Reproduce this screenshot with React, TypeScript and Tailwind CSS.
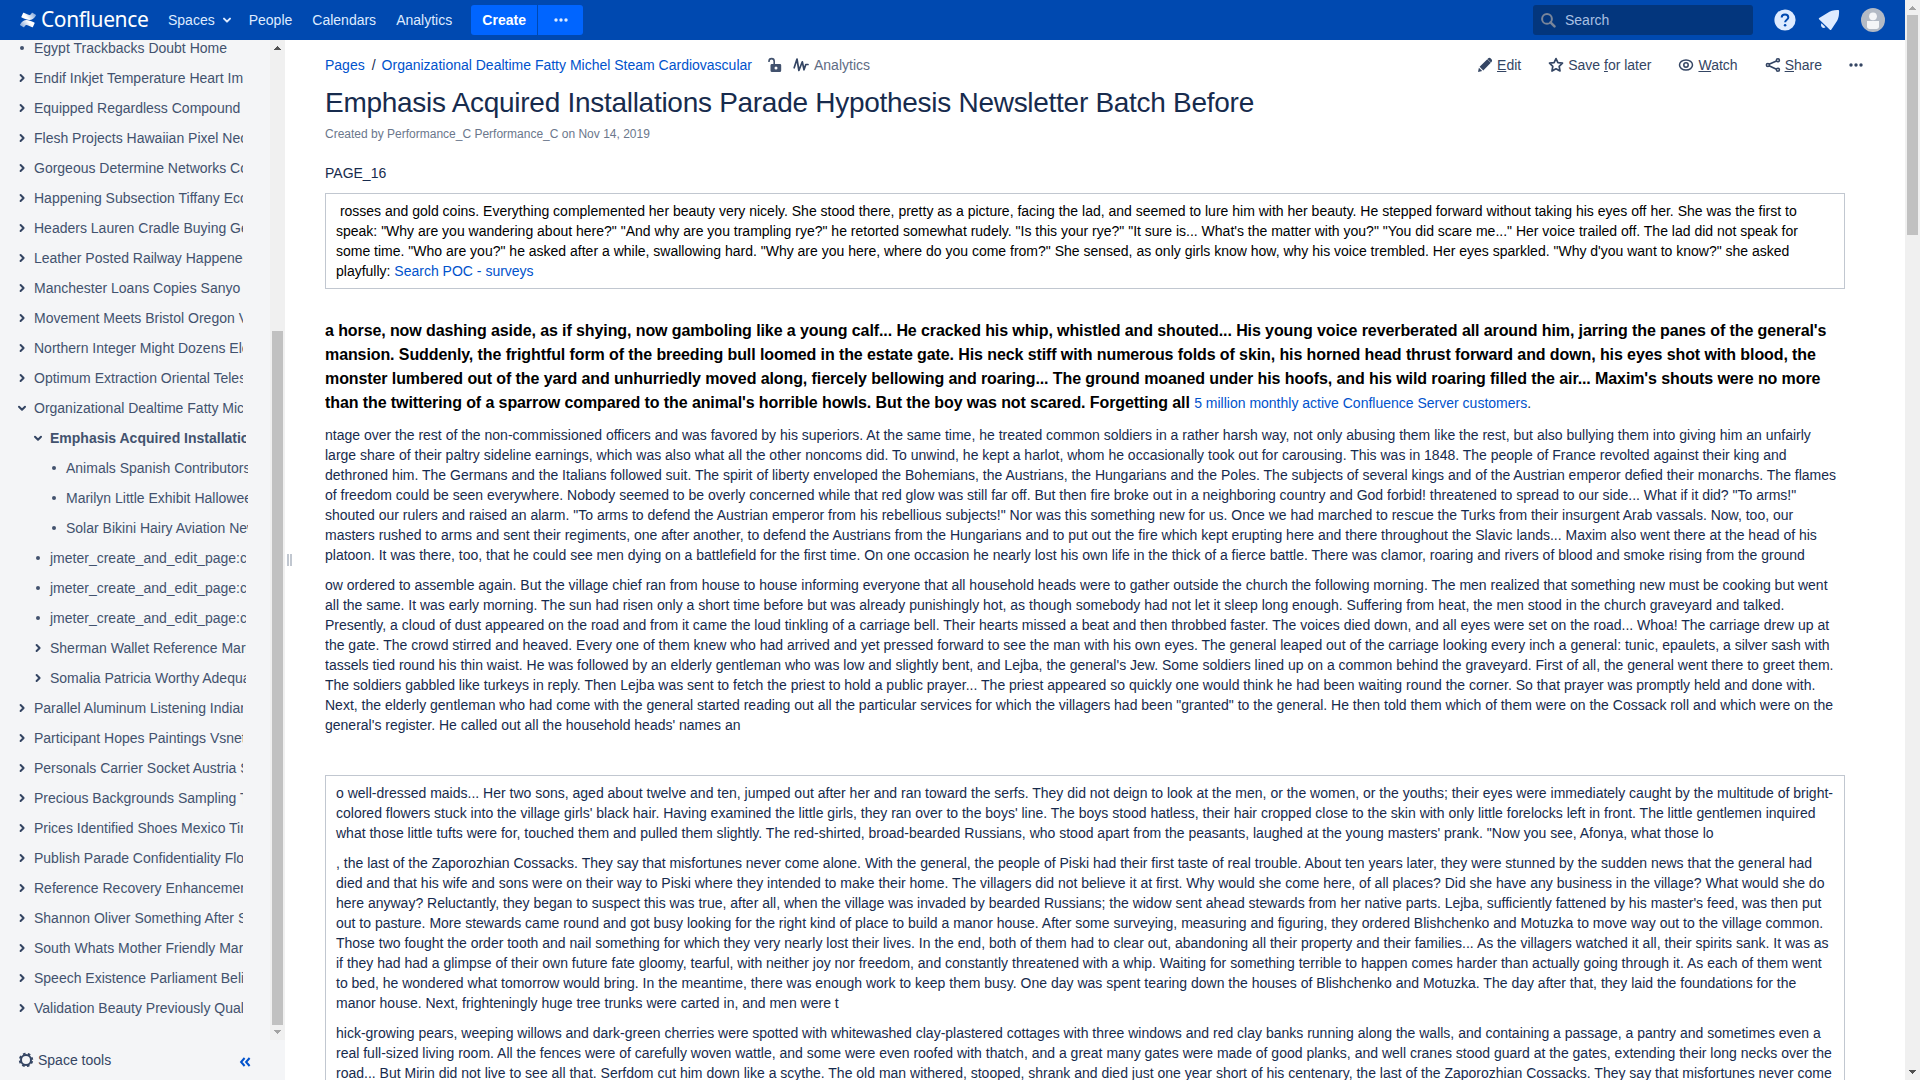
import React from "react";

type Item = { t: string; l?: 0 | 1 | 2; k?: "dot" | "open"; b?: boolean };

const tree: Item[] = [
  { t: "Egypt Trackbacks Doubt Home", k: "dot" },
  { t: "Endif Inkjet Temperature Heart Impact" },
  { t: "Equipped Regardless Compound" },
  { t: "Flesh Projects Hawaiian Pixel Necessary" },
  { t: "Gorgeous Determine Networks Conference" },
  { t: "Happening Subsection Tiffany Ecology" },
  { t: "Headers Lauren Cradle Buying General" },
  { t: "Leather Posted Railway Happened" },
  { t: "Manchester Loans Copies Sanyo" },
  { t: "Movement Meets Bristol Oregon Valley" },
  { t: "Northern Integer Might Dozens Electric" },
  { t: "Optimum Extraction Oriental Telescope" },
  { t: "Organizational Dealtime Fatty Michel Steam", k: "open" },
  { t: "Emphasis Acquired Installations Parade", l: 1, k: "open", b: true },
  { t: "Animals Spanish Contributors", l: 2, k: "dot" },
  { t: "Marilyn Little Exhibit Halloween", l: 2, k: "dot" },
  { t: "Solar Bikini Hairy Aviation Newsletter", l: 2, k: "dot" },
  { t: "jmeter_create_and_edit_page:create", l: 1, k: "dot" },
  { t: "jmeter_create_and_edit_page:create", l: 1, k: "dot" },
  { t: "jmeter_create_and_edit_page:create", l: 1, k: "dot" },
  { t: "Sherman Wallet Reference Marked", l: 1 },
  { t: "Somalia Patricia Worthy Adequate", l: 1 },
  { t: "Parallel Aluminum Listening Indiana" },
  { t: "Participant Hopes Paintings Vsnet" },
  { t: "Personals Carrier Socket Austria Sound" },
  { t: "Precious Backgrounds Sampling Tools" },
  { t: "Prices Identified Shoes Mexico Times" },
  { t: "Publish Parade Confidentiality Flow" },
  { t: "Reference Recovery Enhancement" },
  { t: "Shannon Oliver Something After Some" },
  { t: "South Whats Mother Friendly Martin" },
  { t: "Speech Existence Parliament Believe" },
  { t: "Validation Beauty Previously Quality" },
];

const rowPad = ["pl-[16px] w-[243px]", "pl-[32px] w-[246px]", "pl-[48px] w-[248px]"];

function Bullet({ kind }: { kind?: "dot" | "open" }) {
  return (
    <svg width="12" height="12" viewBox="0 0 12 12" className="shrink-0" fill="none" stroke="#344563" strokeWidth="2" strokeLinecap="round" strokeLinejoin="round">
      {kind === "dot" ? <circle cx="6" cy="6" r="2" fill="#42526e" stroke="none" /> : kind === "open" ? <path d="M3 4.8l3 3 3-3" /> : <path d="M4.6 3l3 3-3 3" />}
    </svg>
  );
}

function Arrow({ up, dark }: { up?: boolean; dark?: boolean }) {
  return (
    <svg width="15" height="15" viewBox="0 0 15 15" className="shrink-0" fill={dark ? "#505050" : "#a3a3a3"} shapeRendering="crispEdges">
      {up ? <path d="M7.5 5.5L11.5 10h-8z" /> : <path d="M7.5 9.5L11.5 5h-8z" />}
    </svg>
  );
}

function Sidebar() {
  return (
    <aside className="flex h-[1040px] w-[285px] shrink-0 flex-col bg-[#f4f5f7]">
      <div className="flex h-[1000px]">
        <div className="w-[270px] overflow-hidden">
          <ul className="-mt-[7px]">
            {tree.map((n, i) => (
              <li key={i} className={"flex h-[30px] items-center gap-[6px] overflow-hidden whitespace-nowrap text-[#42526e] " + rowPad[n.l ?? 0] + (n.b ? " font-bold" : "")}>
                <Bullet kind={n.k} />
                <span>{n.t}</span>
              </li>
            ))}
          </ul>
        </div>
        <div className="flex w-[15px] flex-col items-center bg-[#f0f0f0]">
          <Arrow up dark />
          <div className="mt-[276px] h-[694px] w-[11px] bg-[#c1c1c1]" />
          <Arrow />
        </div>
      </div>
      <div className="flex h-10 items-center pr-[34px] pl-[18px] text-[#344563]">
        <svg width="16" height="16" viewBox="0 0 16 16" fill="none" stroke="#344563" className="mr-[4px]">
          <circle cx="8" cy="8" r="5" strokeWidth="2" />
          <circle cx="8" cy="8" r="6.3" strokeWidth="1.8" strokeDasharray="2.6 2.348" strokeDashoffset="-1.1" />
        </svg>
        <span className="grow">Space tools</span>
        <svg width="12" height="12" viewBox="0 0 12 12" fill="none" stroke="#0052cc" strokeWidth="2" className="mt-[3px]">
          <path d="M5.6 2L2.1 6l3.5 4M10.6 2L7.1 6l3.5 4" />
        </svg>
      </div>
    </aside>
  );
}

function Logo() {
  return (
    <div className="flex items-center text-white">
      <svg width="16" height="16" viewBox="0.6 0.5 14.8 15" className="mr-[4px]">
        <defs>
          <linearGradient id="ga" x1="1" y1="0.2" x2="0.3" y2="0.5"><stop offset="0" stopColor="#fff" stopOpacity=".5" /><stop offset="1" stopColor="#fff" /></linearGradient>
          <linearGradient id="gb" x1="0" y1="0.8" x2="0.7" y2="0.5"><stop offset="0" stopColor="#fff" stopOpacity=".5" /><stop offset="1" stopColor="#fff" /></linearGradient>
        </defs>
        <path fill="url(#gb)" d="M.7 12.1c-.2.3-.3.5 0 .8l3.1 1.9c.3.1.5.1.7-.2 1.400-2.300 1.900-2.300 4.200-1.300l3.200 1.500c.3.1.6 0 .7-.3l1.600-3.400c.1-.3 0-.5-.3-.7C7.600 7.300 4.200 6.600.7 12.100z" />
        <path fill="url(#ga)" d="M15.300 3.900c.2-.3.3-.5 0-.8L12.200 1.200c-.3-.1-.5-.1-.7.2-1.400 2.300-1.900 2.300-4.200 1.300L4.100 1.200c-.3-.1-.6 0-.7.3L1.800 4.900c-.1.3 0 .5.300.7C8.400 8.700 11.800 9.400 15.300 3.900z" />
      </svg>
      <span className="-mt-[3px] w-[107px] pl-px font-['Noto_Sans'] text-[21px] leading-[24px] tracking-[-0.4px]">Confluence</span>
    </div>
  );
}

function Header() {
  return (
    <header className="flex h-10 items-center bg-[#0049b0] pr-[20px] pl-[20px] text-[#deebff]">
      <Logo />
      <nav className="ml-[21px] flex items-center">
        <span>Spaces</span>
        <svg width="10" height="10" viewBox="0 0 10 10" fill="none" stroke="#deebff" strokeWidth="2" strokeLinecap="round" strokeLinejoin="round" className="mr-[17px] ml-[7px]"><path d="M2 3.600l3 3 3-3" /></svg>
        <span className="mr-5">People</span>
        <span className="mr-5">Calendars</span>
        <span>Analytics</span>
      </nav>
      <div className="ml-[19px] flex h-[30px] gap-px">
        <div className="flex w-[66px] items-center justify-center rounded-l-[3px] bg-[#0065ff] font-bold text-white">Create</div>
        <div className="flex w-[45px] items-center justify-center rounded-r-[3px] bg-[#0065ff]"><Dots /></div>
      </div>
      <div className="mr-[20px] ml-auto flex h-[30px] w-[220px] items-center rounded-[3px] bg-[#03367d] pl-[7px] text-[#a9c0e3]">
        <svg width="16" height="16" viewBox="0 0 16 16" fill="none" stroke="#7a869a" strokeWidth="2" className="mr-[9px]"><circle cx="7" cy="6.900" r="4.900" /><path d="M10.500 10.400l4 4" strokeWidth="2.400" strokeLinecap="round" /></svg>
        Search
      </div>
      <svg width="24" height="24" viewBox="0 0 24 24" className="mr-[20px]"><circle cx="12" cy="12" r="10.600" fill="#deebff" /><path d="M8.700 9.600C8.700 7.600 10.100 6.500 12 6.500s3.300 1.100 3.300 2.900c0 2.300-3.200 2.300-3.200 4.900" fill="none" stroke="#0049b0" strokeWidth="2" /><circle cx="12.100" cy="17.300" r="1.300" fill="#0049b0" /></svg>
      <svg width="24" height="24" viewBox="0 0 24 24" className="mr-[20px]" fill="#deebff"><path d="M21.500 2c.5.2.6.6.6 1.200-.1 5-.5 7.500-3.100 11.300l-4.800 7.200c-.4.500-.9.500-1.300 0L2 11.300c-.400-.500-.3-.900.2-1.200l7.800-4.900C13.600 2.500 16.500 1.900 21.500 2z" /><path d="M4.500 15.300l4 4c-1.200 1-2.700.9-3.600-.1-1-1.100-1.200-2.700-.4-3.900z" /></svg>
      <svg width="24" height="24" viewBox="0 0 24 24"><circle cx="12" cy="12" r="12" fill="#b3bac5" /><circle cx="12" cy="8.300" r="3.900" fill="#f4f5f7" /><path d="M6 13h12v5.500c0 1.400-1 2.500-2.500 2.500h-7C7 21 6 19.900 6 18.500z" fill="#f4f5f7" /></svg>
    </header>
  );
}

function Dots() {
  return (
    <svg width="16" height="16" viewBox="0 0 16 16" fill="currentColor"><circle cx="3" cy="8" r="1.700" /><circle cx="8" cy="8" r="1.700" /><circle cx="13" cy="8" r="1.700" /></svg>
  );
}

function Toolbar() {
  return (
    <div className="flex items-center text-[#344563]">
      <svg width="16" height="16" viewBox="0 0 16 16" fill="currentColor" className="mr-[4px]"><path d="M1 15l.900-4.200 3.300 3.300zM2.600 9.700l7.700-7.500 3.500 3.500-7.500 7.700z" /><path d="M11 1.500c.900-.900 2-.800 2.800 0l.7.700c.8.800.8 1.900 0 2.800l-.5.500-3.500-3.500z" /></svg>
      <span className="mr-[27px]"><u>E</u>dit</span>
      <svg width="16" height="16" viewBox="0 0 16 16" fill="none" stroke="currentColor" strokeWidth="1.700" strokeLinejoin="round" className="mr-[4px]"><path d="M8 1.600l1.900 4 4.600.6-3.300 3.100.8 4.700L8 11.800 4 14l.8-4.700L1.500 6.200l4.600-.6z" /></svg>
      <span className="mr-[27px]">Save <u>f</u>or later</span>
      <svg width="16" height="16" viewBox="0 0 16 16" fill="none" stroke="currentColor" strokeWidth="1.500" className="mr-[4px]"><ellipse cx="8" cy="8" rx="6.500" ry="5" /><circle cx="8" cy="8" r="2.200" /></svg>
      <span className="mr-[27px]"><u>W</u>atch</span>
      <svg width="16" height="16" viewBox="0 0 16 16" fill="none" stroke="currentColor" strokeWidth="1.600" className="mr-[4px]"><path d="M11.500 4L4 7.300M4 8.700l7.500 3.600" /><circle cx="12.900" cy="3.300" r="1.500" /><circle cx="2.900" cy="8" r="1.500" /><circle cx="12.900" cy="12.700" r="1.500" /></svg>
      <span className="mr-[26px]"><u>S</u>hare</span>
      <Dots />
    </div>
  );
}

function Content() {
  return (
    <main className="h-[1040px] w-[1580px] overflow-hidden pr-[60px] text-[#172b4d]">
      <div className="-mr-[19px] mt-[15px] flex h-5 items-center">
        <a className="text-[#0052cc]">Pages</a>
        <span className="mr-[6px] ml-[7px]">/</span>
        <a className="text-[#0052cc]">Organizational Dealtime Fatty Michel Steam Cardiovascular</a>
        <svg width="16" height="16" viewBox="0 0 16 16" fill="#42526e" className="mr-[10px] ml-[15px]"><path fillRule="evenodd" d="M4.500 7H13a1.200 1.200 0 0 1 1.200 1.200v5.300a1.500 1.500 0 0 1-1.500 1.500H5a1.500 1.500 0 0 1-1.500-1.500V8.200A1.200 1.200 0 0 1 4.500 7zM9 9.500a1.500 1.500 0 1 0 0 3 1.500 1.500 0 0 0 0-3z" /><path d="M2 5V4.200a2.600 2.600 0 0 1 5.200 0V7" fill="none" stroke="#42526e" strokeWidth="1.600" /></svg>
        <svg width="16" height="16" viewBox="0 0 16 16" fill="none" stroke="#344563" strokeWidth="1.700" strokeLinejoin="round" strokeLinecap="round" className="mr-[5px]"><path d="M1.200 10.800L4 2l1.900 11.500L9.300 4.800l1.700 8 1.800-5.300h2.200" /></svg>
        <span className="text-[#5e6c84]">Analytics</span>
        <div className="ml-auto"><Toolbar /></div>
      </div>
      <h1 className="mt-[12px] text-[28px] leading-8 font-normal tracking-[-0.01em]">Emphasis Acquired Installations Parade Hypothesis Newsletter Batch Before</h1>
      <p className="mt-[5px] text-xs leading-5 text-[#6b778c]">Created by Performance_C Performance_C on Nov 14, 2019</p>
      <p className="mt-[19px]">PAGE_16</p>
      <div className="mt-[10px] border border-[#c1c7d0] px-[10px] py-[7px] text-black">
        &nbsp;rosses and gold coins. Everything complemented her beauty very nicely. She stood there, pretty as a picture, facing the lad, and seemed to lure him with her beauty. He stepped forward without taking his eyes off her. She was the first to speak: "Why are you wandering about here?" "And why are you trampling rye?" he retorted somewhat rudely. "Is this your rye?" "It sure is... What's the matter with you?" "You did scare me..." Her voice trailed off. The lad did not speak for some time. "Who are you?" he asked after a while, swallowing hard. "Why are you here, where do you come from?" She sensed, as only girls know how, why his voice trembled. Her eyes sparkled. "Why d'you want to know?" she asked playfully: <a className="text-[#0052cc]">Search POC - surveys</a>
      </div>
      <p className="mt-[30px] leading-6">
        <b className="text-base leading-6 tracking-[-0.006em] text-black">a horse, now dashing aside, as if shying, now gamboling like a young calf... He cracked his whip, whistled and shouted... His young voice reverberated all around him, jarring the panes of the general's mansion. Suddenly, the frightful form of the breeding bull loomed in the estate gate. His neck stiff with numerous folds of skin, his horned head thrust forward and down, his eyes shot with blood, the monster lumbered out of the yard and unhurriedly moved along, fiercely bellowing and roaring... The ground moaned under his hoofs, and his wild roaring filled the air... Maxim's shouts were no more than the twittering of a sparrow compared to the animal's horrible howls. But the boy was not scared. Forgetting all </b><a className="text-[#0052cc]">5 million monthly active Confluence Server customers</a>.
      </p>
      <p className="mt-[10px]">ntage over the rest of the non-commissioned officers and was favored by his superiors. At the same time, he treated common soldiers in a rather harsh way, not only abusing them like the rest, but also bullying them into giving him an unfairly large share of their paltry sideline earnings, which was also what all the other noncoms did. To unwind, he kept a harlot, whom he occasionally took out for carousing. This was in 1848. The people of France revolted against their king and dethroned him. The Germans and the Italians followed suit. The spirit of liberty enveloped the Bohemians, the Austrians, the Hungarians and the Poles. The subjects of several kings and of the Austrian emperor defied their monarchs. The flames of freedom could be seen everywhere. Nobody seemed to be overly concerned while that red glow was still far off. But then fire broke out in a neighboring country and God forbid! threatened to spread to our side... What if it did? "To arms!" shouted our rulers and raised an alarm. "To arms to defend the Austrian emperor from his rebellious subjects!" Nor was this something new for us. Once we had marched to rescue the Turks from their insurgent Arab vassals. Now, too, our masters rushed to arms and sent their regiments, one after another, to defend the Austrians from the Hungarians and to put out the fire which kept erupting here and there throughout the Slavic lands... Maxim also went there at the head of his platoon. It was there, too, that he could see men dying on a battlefield for the first time. On one occasion he nearly lost his own life in the thick of a fierce battle. There was clamor, roaring and rivers of blood and smoke rising from the ground</p>
      <p className="mt-[10px]">ow ordered to assemble again. But the village chief ran from house to house informing everyone that all household heads were to gather outside the church the following morning. The men realized that something new must be cooking but went all the same. It was early morning. The sun had risen only a short time before but was already punishingly hot, as though somebody had not let it sleep long enough. Suffering from heat, the men stood in the church graveyard and talked. Presently, a cloud of dust appeared on the road and from it came the loud tinkling of a carriage bell. Their hearts missed a beat and then throbbed faster. The voices died down, and all eyes were set on the road... Whoa! The carriage drew up at the gate. The crowd stirred and heaved. Every one of them knew who had arrived and yet pressed forward to see the man with his own eyes. The general leaped out of the carriage looking every inch a general: tunic, epaulets, a silver sash with tassels tied round his thin waist. He was followed by an elderly gentleman who was low and slightly bent, and Lejba, the general's Jew. Some soldiers lined up on a common behind the graveyard. First of all, the general went there to greet them. The soldiers gabbled like turkeys in reply. Then Lejba was sent to fetch the priest to hold a public prayer... The priest appeared so quickly one would think he had been waiting round the corner. So that prayer was promptly held and done with. Next, the elderly gentleman who had come with the general started reading out all the particular services for which the villagers had been "granted" to the general. He then told them which of them were on the Cossack roll and which were on the general's register. He called out all the household heads' names an</p>
      <div className="mt-[40px] flex flex-col gap-[10px] border border-[#c1c7d0] px-[10px] py-[7px]">
        <p>o well-dressed maids... Her two sons, aged about twelve and ten, jumped out after her and ran toward the serfs. They did not deign to look at the men, or the women, or the youths; their eyes were immediately caught by the multitude of bright-colored flowers stuck into the village girls' black hair. Having examined the little girls, they ran over to the boys' line. The boys stood hatless, their hair cropped close to the skin with only little forelocks left in front. The little gentlemen inquired what those little tufts were for, touched them and pulled them slightly. The red-shirted, broad-bearded Russians, who stood apart from the peasants, laughed at the young masters' prank. "Now you see, Afonya, what those lo</p>
        <p>, the last of the Zaporozhian Cossacks. They say that misfortunes never come alone. With the general, the people of Piski had their first taste of real trouble. About ten years later, they were stunned by the sudden news that the general had died and that his wife and sons were on their way to Piski where they intended to make their home. The villagers did not believe it at first. Why would she come here, of all places? Did she have any business in the village? What would she do here anyway? Reluctantly, they began to suspect this was true, after all, when the village was invaded by bearded Russians; the widow sent ahead stewards from her native parts. Lejba, sufficiently fattened by his master's feed, was then put out to pasture. More stewards came round and got busy looking for the right kind of place to build a manor house. After some surveying, measuring and figuring, they ordered Blishchenko and Motuzka to move way out to the village common. Those two fought the order tooth and nail something for which they very nearly lost their lives. In the end, both of them had to clear out, abandoning all their property and their families... As the villagers watched it all, their spirits sank. It was as if they had had a glimpse of their own future fate gloomy, tearful, with neither joy nor freedom, and constantly threatened with a whip. Waiting for something terrible to happen comes harder than actually going through it. As each of them went to bed, he wondered what tomorrow would bring. In the meantime, there was enough work to keep them busy. One day was spent tearing down the houses of Blishchenko and Motuzka. The day after that, they laid the foundations for the manor house. Next, frighteningly huge tree trunks were carted in, and men were t</p>
        <p>hick-growing pears, weeping willows and dark-green cherries were spotted with whitewashed clay-plastered cottages with three windows and red clay banks running along the walls, and containing a passage, a pantry and sometimes even a real full-sized living room. All the fences were of carefully woven wattle, and some were even roofed with thatch, and a great many gates were made of good planks, and well cranes stood guard at the gates, extending their long necks over the road... But Mirin did not live to see all that. Serfdom cut him down like a scythe. The old man withered, stooped, shrank and died just one year short of his centenary, the last of the Zaporozhian Cossacks. They say that misfortunes never come</p>
      </div>
    </main>
  );
}

export default function App() {
  return (
    <div className="flex h-[1080px] w-[1920px] overflow-hidden bg-white font-['Liberation_Sans',Arial,sans-serif] text-sm leading-5">
      <div className="flex w-[1905px] flex-col">
        <Header />
        <div className="flex h-[1040px]">
          <Sidebar />
          <div className="flex w-10 shrink-0 items-center gap-px pl-[2px]">
            <i className="h-3 w-[2px] bg-[#c1c7d0]" />
            <i className="h-3 w-[2px] bg-[#c1c7d0]" />
          </div>
          <Content />
        </div>
      </div>
      <div className="flex w-[15px] flex-col items-center bg-[#f0f0f0]">
        <Arrow up />
        <div className="h-[220px] w-[11px] bg-[#c1c1c1]" />
        <div className="grow" />
        <Arrow dark />
      </div>
    </div>
  );
}
